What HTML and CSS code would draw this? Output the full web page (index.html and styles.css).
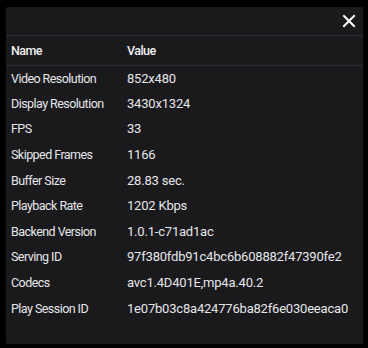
FILE: index.html
```html
<!DOCTYPE html>
<html lang="en">
<head>
  <meta charset="UTF-8"/>
  <title>Video Stats</title>
  <link rel="stylesheet" href="styles.css">
</head>
<body>

<div class="stats">
  <div class="stats-bar">
    <button class="close" aria-label="Close">
      <svg width="14" height="14" viewBox="0 0 14 14"><path d="M2 2L12 12M12 2L2 12" stroke="#fff" stroke-width="2" stroke-linecap="square"/></svg>
    </button>
  </div>
  <table>
    <thead>
      <tr><th>Name</th><th>Value</th></tr>
    </thead>
    <tbody>
      <tr><td>Video Resolution</td><td>852x480</td></tr>
      <tr><td>Display Resolution</td><td>3430x1324</td></tr>
      <tr><td>FPS</td><td>33</td></tr>
      <tr><td>Skipped Frames</td><td>1166</td></tr>
      <tr><td>Buffer Size</td><td>28.83 sec.</td></tr>
      <tr><td>Playback Rate</td><td>1202 Kbps</td></tr>
      <tr><td>Backend Version</td><td>1.0.1-c71ad1ac</td></tr>
      <tr><td>Serving ID</td><td>97f380fdb91c4bc6b608882f47390fe2</td></tr>
      <tr><td>Codecs</td><td>avc1.4D401E,mp4a.40.2</td></tr>
      <tr><td>Play Session ID</td><td>1e07b03c8a424776ba82f6e030eeaca0</td></tr>
    </tbody>
  </table>
</div>

</body>
</html>
```
FILE: styles.css
```css
/* ========== Page ========== */
* { margin:0; padding:0; box-sizing:border-box }
body { background:#000; font-family:Roboto,Inter,sans-serif; color:#efeff1 }

/* ========== Stats panel ========== */
.stats {
  margin: 7px 0 0 6px;
  width: 357px;
  height: 337px;
  background: #1a1a1d;
  border-radius: 2px;
}
.stats-bar {
  height: 29px;
  display: flex;
  justify-content: flex-end;
  align-items: center;
  padding-right: 7px;
  border-bottom: 1px solid #2c2c31;
}
.close {
  background: none;
  border: 0;
  width: 14px;
  height: 14px;
  display: flex;
  cursor: pointer;
}

table { width:100%; border-collapse:collapse; font-size:12.5px; letter-spacing:-0.55px }
th {
  text-align: left;
  font-weight: 500;
  height: 29px;
  padding: 1px 0 0 5px;
  border-bottom: 1px solid #2c2c31;
}
td { height: 25.6px; padding: 0 0 0 5px; white-space:nowrap; color:#e6e6ea }
th:first-child, td:first-child { width: 116px }
td:last-child { font-size: 13px; letter-spacing: -0.2px }
```
